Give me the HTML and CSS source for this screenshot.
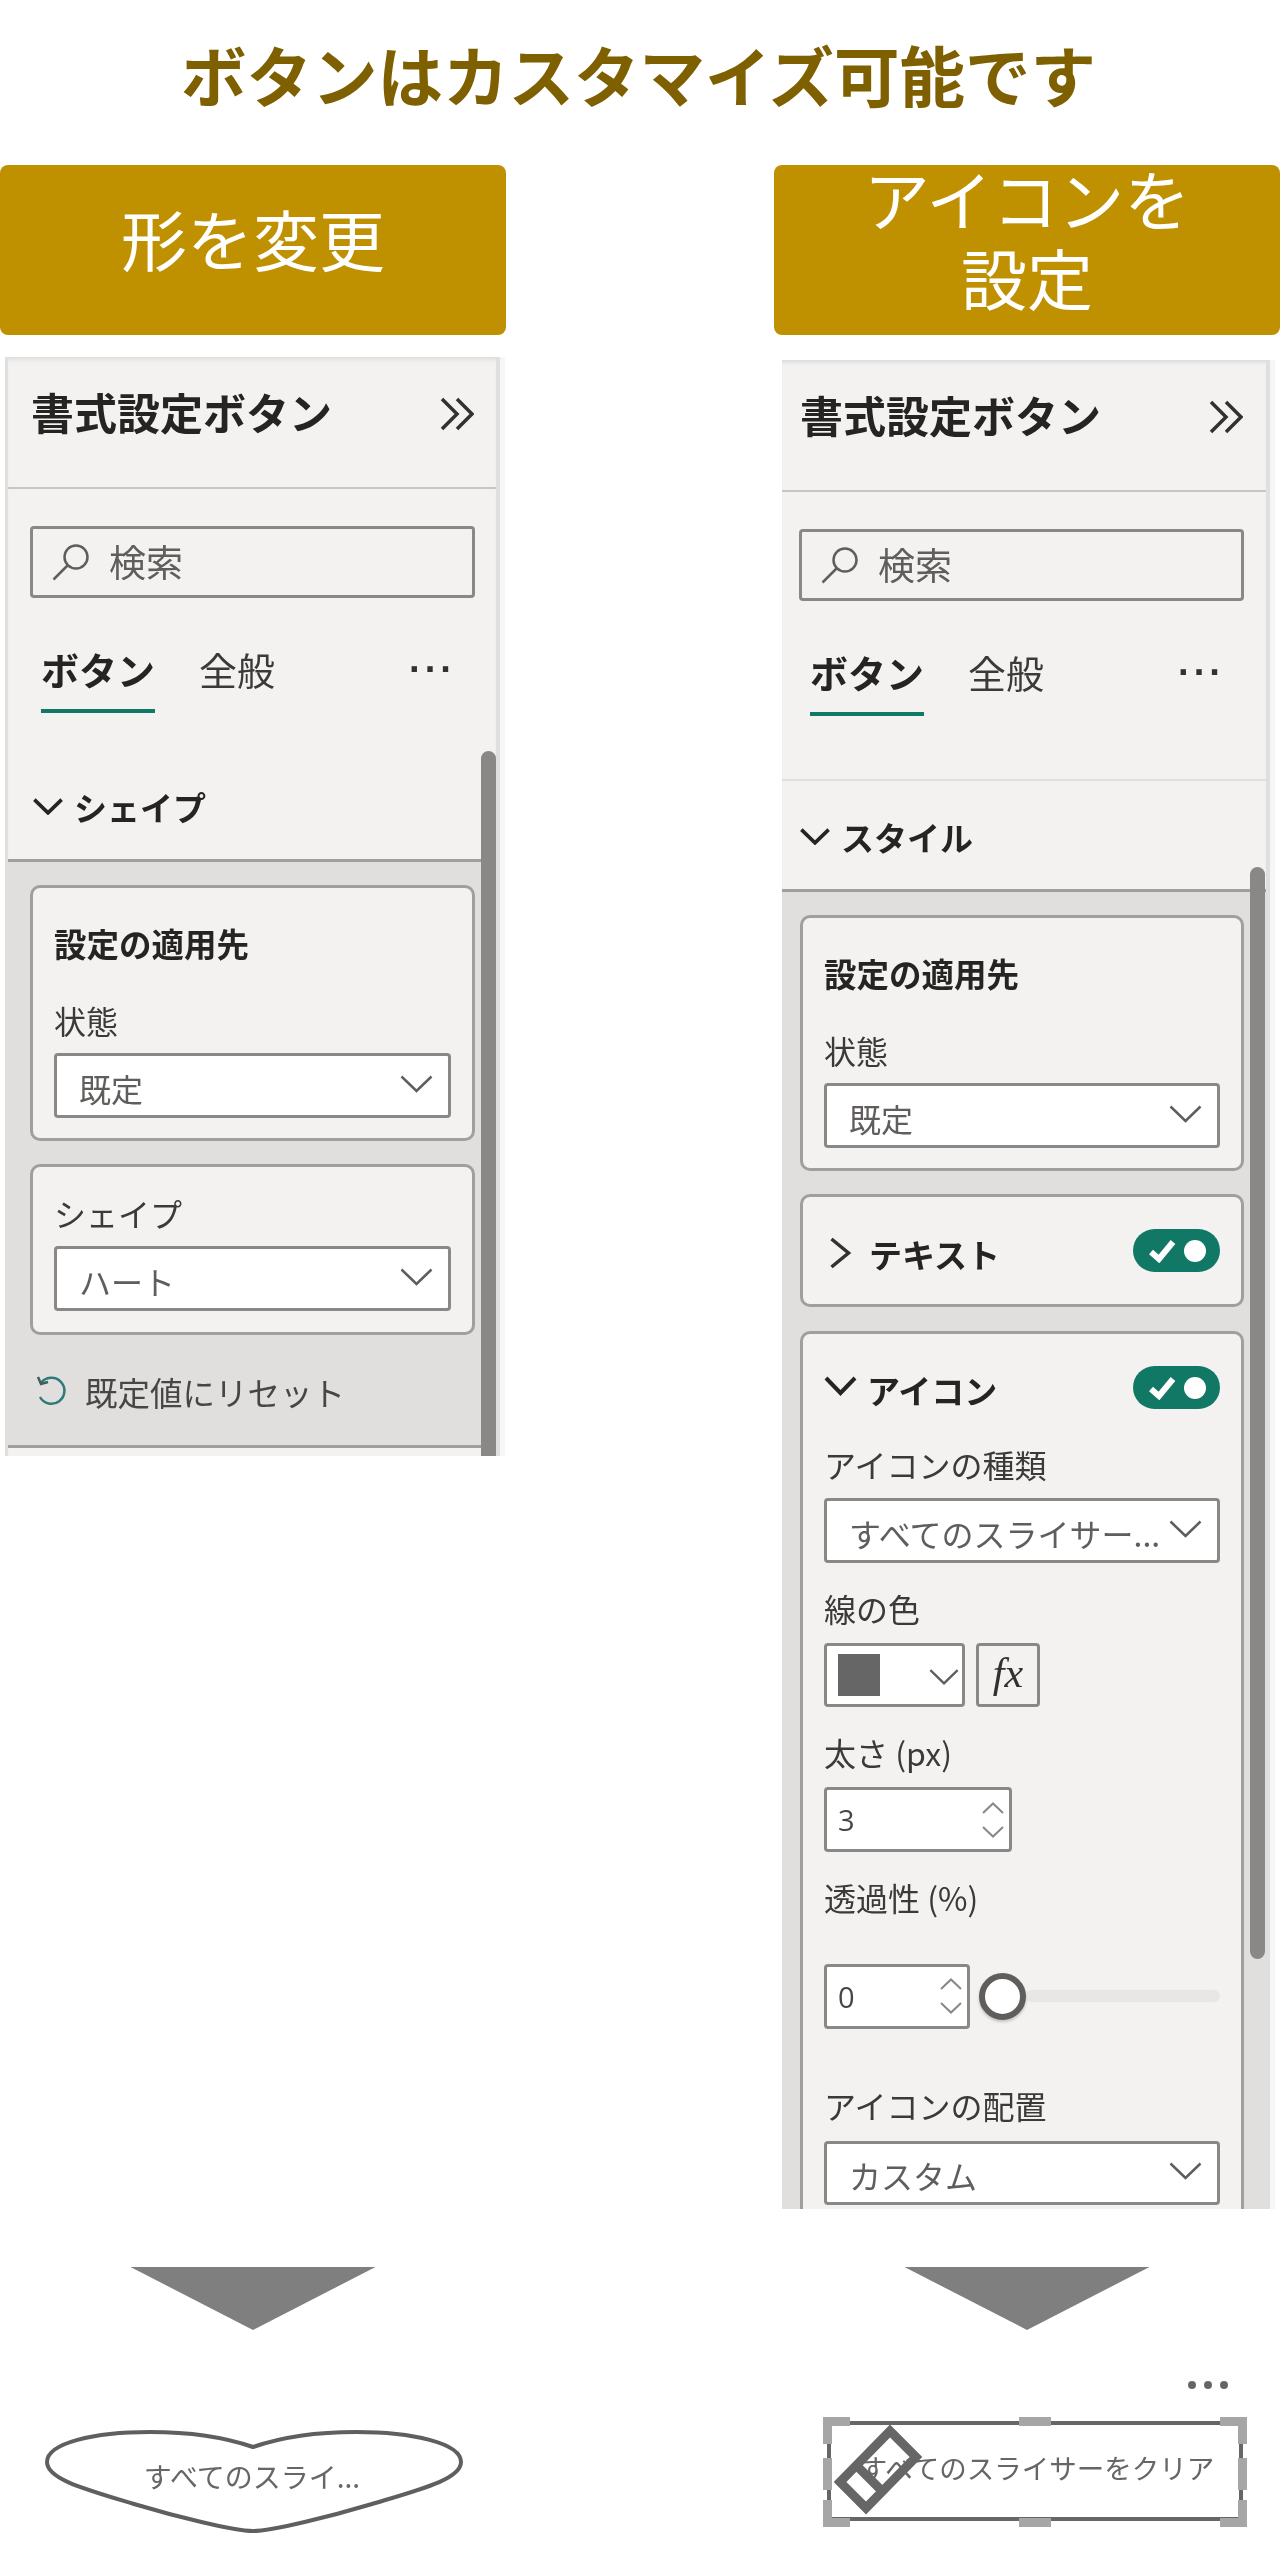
FILE: index.html
```html
<!DOCTYPE html>
<html lang="ja">
<head>
<meta charset="utf-8">
<title>ボタンはカスタマイズ可能です</title>
<link rel="stylesheet" href="styles.css">
</head>
<body>
<svg class="defs" aria-hidden="true">
  <symbol id="sel" viewBox="0 0 33 18"><polyline points="1.5,1.5 16.5,16 31.5,1.5"/></symbol>
  <symbol id="dbl" viewBox="0 0 34 34"><polyline points="2,2 17,17 2,32"/><polyline points="17,2 32,17 17,32"/></symbol>
  <symbol id="mag" viewBox="0 0 38 37"><circle cx="24" cy="13" r="11.5"/><line x1="15.5" y1="21.5" x2="1.5" y2="35.5"/></symbol>
  <symbol id="spin" viewBox="0 0 22 36"><polyline points="1,11 11,1.5 21,11"/><polyline points="1,25 11,34.5 21,25"/></symbol>
  <symbol id="tick" viewBox="0 0 28 24"><polyline points="3,13 11,20 25,3"/></symbol>
</svg>
<main class="page">
  <h1 class="title">ボタンはカスタマイズ可能です</h1>
  <div class="columns">

    <section class="col">
      <div class="banner">形を変更</div>
      <div class="slot">
        <div class="panel panel-left">
          <div class="scroll scroll-left"></div>
          <div class="p-head"><span>書式設定ボタン</span><svg class="i-dbl"><use href="#dbl"/></svg></div>
          <div class="search"><svg class="i-mag"><use href="#mag"/></svg><span>検索</span></div>
          <div class="tabs"><span class="tab tab-on">ボタン</span><span class="tab">全般</span><span class="more">···</span></div>
          <div class="sec-head sec-head-left"><svg class="i-sec"><use href="#sel"/></svg><span>シェイプ</span></div>
          <div class="sec-body">
            <div class="card">
              <div class="card-title">設定の適用先</div>
              <div class="label lab-first">状態</div>
              <div class="select"><span>既定</span><svg class="i-sel"><use href="#sel"/></svg></div>
            </div>
            <div class="card card-compact">
              <div class="label">シェイプ</div>
              <div class="select sel-tight"><span>ハート</span><svg class="i-sel"><use href="#sel"/></svg></div>
            </div>
            <div class="reset">
              <svg class="i-reset" viewBox="0 0 32 32"><path class="r-arc" d="M6 7 A13 13 0 1 1 5 21"/><polyline class="r-arrow" points="3,1 6,8 13,6"/></svg>
              <span>既定値にリセット</span>
            </div>
          </div>
          <div class="p-foot"></div>
        </div>
      </div>
      <div class="arrow"></div>
      <div class="heart">
        <svg class="heart-shape" viewBox="0 0 420 105"><path d="M209 18C180 8 150 3 106 3C50 3 3 14 3 33C3 50 40 60 90 75C130 87 190 102 209 102C228 102 288 87 328 75C378 60 417 50 417 33C417 14 368 3 312 3C268 3 238 8 209 18Z"/></svg>
        <span class="heart-text">すべてのスライ...</span>
      </div>
    </section>

    <section class="col">
      <div class="banner">アイコンを<br>設定</div>
      <div class="slot">
        <div class="panel panel-right">
          <div class="scroll scroll-right"></div>
          <div class="p-head"><span>書式設定ボタン</span><svg class="i-dbl"><use href="#dbl"/></svg></div>
          <div class="search"><svg class="i-mag"><use href="#mag"/></svg><span>検索</span></div>
          <div class="tabs"><span class="tab tab-on">ボタン</span><span class="tab">全般</span><span class="more">···</span></div>
          <div class="rule"></div>
          <div class="sec-head"><svg class="i-sec"><use href="#sel"/></svg><span>スタイル</span></div>
          <div class="sec-body">
            <div class="card">
              <div class="card-title">設定の適用先</div>
              <div class="label lab-first">状態</div>
              <div class="select"><span>既定</span><svg class="i-sel"><use href="#sel"/></svg></div>
            </div>
            <div class="card card-row">
              <div class="row-head">
                <svg class="i-right" viewBox="0 0 21 32"><polyline points="2,2 19,16 2,30"/></svg>
                <span class="row-title">テキスト</span>
                <span class="toggle"><svg class="i-tick"><use href="#tick"/></svg><i class="knob"></i></span>
              </div>
            </div>
            <div class="card card-row card-open">
              <div class="row-head">
                <svg class="i-down" viewBox="0 0 33 20"><polyline points="2,2 16.5,17 31,2"/></svg>
                <span class="row-title">アイコン</span>
                <span class="toggle"><svg class="i-tick"><use href="#tick"/></svg><i class="knob"></i></span>
              </div>
              <div class="label lab-a">アイコンの種類</div>
              <div class="select sel-b"><span>すべてのスライサー...</span><svg class="i-sel"><use href="#sel"/></svg></div>
              <div class="label lab-b">線の色</div>
              <div class="color-row">
                <div class="color-pick"><i class="swatch"></i><svg class="i-sel"><use href="#sel"/></svg></div>
                <div class="fx">fx</div>
              </div>
              <div class="label lab-b">太さ (px)</div>
              <div class="number num-wide"><span>3</span><svg class="i-spin"><use href="#spin"/></svg></div>
              <div class="label lab-b">透過性 (%)</div>
              <div class="slider-row">
                <div class="number num-narrow"><span>0</span><svg class="i-spin"><use href="#spin"/></svg></div>
                <i class="thumb"></i>
                <i class="track"></i>
              </div>
              <div class="label lab-c">アイコンの配置</div>
              <div class="select sel-last"><span>カスタム</span><svg class="i-sel"><use href="#sel"/></svg></div>
            </div>
          </div>
        </div>
      </div>
      <div class="arrow"></div>
      <div class="dots"><i></i><i></i><i></i></div>
      <div class="visual">
        <span class="visual-text">すべてのスライサーをクリア</span>
        <svg class="visual-frame" viewBox="0 0 424 110">
          <rect class="vf-line" x="6" y="6" width="412" height="96"/>
          <path class="vf-handle" d="M0 0H27V9H9V27H0ZM424 0H397V9H415V27H424ZM0 110H27V101H9V83H0ZM424 110H397V101H415V83H424ZM196 0H228V9H196ZM196 101H228V110H196ZM0 41H9V73H0ZM415 41H424V73H415Z"/>
          <polygon class="vf-icon" points="67,14 93,40 43,91 17,65"/>
          <line class="vf-icon" x1="32" y1="47" x2="60" y2="75"/>
        </svg>
      </div>
    </section>

  </div>
</main>
</body>
</html>
```
FILE: styles.css
```css
* { box-sizing: border-box; }
html, body { margin: 0; padding: 0; background: #fff; }
body { font-family: "Noto Sans CJK JP", "Noto Sans", sans-serif; color: #252423; }
.defs { position: absolute; width: 0; height: 0; }
.page { width: 1280px; height: 2560px; overflow: hidden; }
.title { margin: 0 0 18px; height: 147px; line-height: 147px; font-size: 65.5px; font-weight: 700; color: #7f6000; text-align: center; padding-right: 3px; }
.columns { display: flex; justify-content: space-between; }
.col { width: 506px; display: flex; flex-direction: column; }
.banner { height: 170px; padding-bottom: 26px; border-radius: 8px; background: #bf9000; color: #fff; font-size: 66px; line-height: 79px; text-align: center; display: flex; align-items: center; justify-content: center; }
.slot { height: 1874px; }

.panel { position: relative; overflow: hidden; background: #f3f2f1; border-right: 4px solid #e1dfdd; box-shadow: 5px 0 0 #f6f6f6, inset 0 5px 4px -3px #d8d8d8; filter: blur(.45px); }
.panel-left { margin: 22px 0 0 5px; width: 495px; height: 1099px; border-left: 3px solid #e1dfdd; --card-x: 22px; --card-w: 445px; --sel-w: 397px; }
.panel-right { margin: 25px 0 0 8px; width: 488px; height: 1849px; --card-x: 18px; --card-w: 444px; --sel-w: 396px; }

.scroll { position: absolute; right: 0; width: 15px; background: #8a8886; border-radius: 8px 8px 0 0; z-index: 2; }
.scroll-left { top: 394px; bottom: 0; }
.scroll-right { top: 507px; height: 1092px; right: 1px; border-radius: 8px; }

.p-head { height: 132px; border-bottom: 2px solid #c8c6c4; display: flex; align-items: flex-start; padding-top: 28px; font-size: 43px; line-height: 52px; font-weight: 700; }
.panel-left .p-head { padding-left: 23px; }
.panel-right .p-head { padding-left: 18px; }
.i-dbl { width: 34px; height: 34px; margin: 12px 0 0 108px; fill: none; stroke: #323130; stroke-width: 3.5; }

.search { height: 72px; width: var(--card-w); margin: 37px 0 0 var(--card-x); border: 3px solid #8a8886; border-radius: 4px; display: flex; align-items: center; padding-left: 19px; font-size: 37px; color: #605e5c; }
.search span { margin-top: -3px; }
.i-mag { width: 38px; height: 37px; margin-right: 19px; fill: none; stroke: #605e5c; stroke-width: 2.5; }
.panel-right .search { width: 445px; margin-left: 17px; }

.tabs { display: flex; align-items: flex-start; margin-top: 46px; height: 69px; font-size: 38px; line-height: 50px; }
.panel-left .tabs { padding-left: 33px; }
.panel-right .tabs { padding-left: 28px; }
.tab { color: #3b3a39; height: 69px; margin-right: 44px; }
.tab-on { font-weight: 700; color: #252423; border-bottom: 4px solid #117865; }
.more { font-size: 38px; line-height: 38px; letter-spacing: 3px; margin: 6px 0 0 90px; font-family: "Liberation Sans", sans-serif; font-weight: 700; color: #323130; }

.rule { height: 2px; background: #e1dfdd; margin-top: 63px; }
.sec-head { height: 106px; margin-top: 5px; border-bottom: 3px solid #a19f9d; display: flex; align-items: center; padding: 0 0 2px 18px; font-size: 33px; font-weight: 700; }
.sec-head-left { margin-top: 43px; padding-left: 25px; }
.i-sec { width: 30px; height: 17px; margin-right: 11px; fill: none; stroke: #252423; stroke-width: 4; }

.sec-body { background: #e1dfdd; padding: 23px 0 36px var(--card-x); }
.panel-right .sec-body { padding-bottom: 0; }
.p-foot { border-top: 3px solid #a19f9d; height: 14px; }

.card { width: var(--card-w); border: 3px solid #a19f9d; border-radius: 10px; background: #f3f2f1; padding: 35px 21px 20px; }
.card + .card { margin-top: 23px; }
.card-title { font-size: 32.5px; line-height: 40px; font-weight: 700; white-space: nowrap; }
.label { font-size: 32px; line-height: 40px; color: #3b3a39; white-space: nowrap; }
.lab-first { margin-top: 37px; }
.lab-first + .select { margin-top: 13px; }
.lab-a { margin-top: 35px; }
.lab-b { margin-top: 25px; }
.lab-c { margin-top: 57px; }
.select { width: var(--sel-w); height: 65px; margin-top: 11px; border: 3px solid #8a8886; border-radius: 4px; background: #fff; display: flex; align-items: center; justify-content: space-between; padding: 4px 15px 0 22px; font-size: 32px; color: #605e5c; white-space: nowrap; }
.sel-b { margin-top: 14px; }
.sel-tight { margin-top: 13px; }
.sel-last { height: 64px; margin-top: 16px; }
.i-sel { width: 33px; height: 18px; margin-top: -8px; flex: none; fill: none; stroke: #605e5c; stroke-width: 2.5; }
.card-compact { padding: 26px 21px 21px; }
.reset { display: flex; align-items: center; margin-top: 37px; margin-bottom: -3px; padding-left: 5px; font-size: 32.5px; line-height: 40px; color: #484644; }
.i-reset { width: 32px; height: 32px; margin-right: 18px; fill: none; stroke-width: 2.5; }
.r-arc { stroke: #2f7a78; }
.r-arrow { stroke: #3f5f5f; }

.card-row { padding: 32px 21px 32px; }
.card-open { padding-bottom: 0; height: 900px; }
.card + .card-open { margin-top: 24px; }
.row-head { display: flex; align-items: center; height: 43px; font-size: 33px; font-weight: 700; }
.row-title { margin: 6px 0 0 -2px; flex: 1; line-height: 40px; }
.card-open .row-title { margin-top: 4px; }
.i-right { width: 22px; height: 32px; margin: 4px 20px 0 5px; fill: none; stroke: #323130; stroke-width: 3.5; }
.i-down { width: 33px; height: 20px; margin: -3px 12px 0 0; fill: none; stroke: #252423; stroke-width: 4; }
.toggle { flex: none; width: 87px; height: 43px; border-radius: 22px; background: #117865; display: flex; align-items: center; padding-left: 15px; }
.i-tick { width: 28px; height: 24px; fill: none; stroke: #fff; stroke-width: 6; }
.knob { width: 22px; height: 22px; border-radius: 50%; background: #fff; margin-left: 8px; }

.color-row { display: flex; gap: 11px; margin-top: 15px; }
.color-pick { width: 141px; height: 64px; border: 3px solid #8a8886; border-radius: 4px; background: #fff; display: flex; align-items: center; justify-content: space-between; padding: 0 3px 0 11px; }
.color-pick .i-sel { margin-top: 4px; width: 30px; }
.swatch { width: 42px; height: 42px; background: #666; }
.fx { width: 64px; height: 64px; border: 3px solid #8a8886; border-radius: 4px; background: #f3f2f1; font-family: "Liberation Serif", serif; font-style: italic; font-size: 42px; line-height: 54px; text-align: center; color: #323130; }

.number { height: 65px; margin-top: 15px; border: 3px solid #8a8886; border-radius: 4px; background: #fff; display: flex; align-items: center; justify-content: space-between; padding: 0 5px 0 11px; font-family: "Open Sans", sans-serif; font-size: 29px; color: #484644; }
.num-wide { width: 188px; }
.num-narrow { width: 146px; margin-top: 0; flex: none; }
.i-spin { width: 22px; height: 36px; fill: none; stroke: #8a8886; stroke-width: 2; }
.slider-row { display: flex; align-items: center; width: var(--sel-w); height: 64px; margin-top: 47px; }
.thumb { flex: none; width: 47px; height: 47px; margin-left: 9px; border-radius: 50%; border: 6px solid #605e5c; background: #fff; box-shadow: 0 2px 3px rgba(0,0,0,.2); position: relative; z-index: 1; }
.track { flex: 1; height: 12px; border-radius: 6px; background: #e8e7e6; margin-left: -1px; }

.arrow { width: 245px; height: 63px; margin: 58px auto 0; background: #7f7f7f; clip-path: polygon(0 0, 100% 0, 50% 100%); }

.heart { position: relative; width: 420px; height: 105px; margin: 99px 0 0 44px; display: flex; align-items: center; justify-content: center; filter: blur(.4px); }
.heart-shape { position: absolute; inset: 0; width: 100%; height: 100%; fill: #fff; stroke: #5f5f5f; stroke-width: 4; }
.heart-text { position: relative; font-size: 28px; line-height: 40px; color: #666; margin: -12px 4px 0 0; }

.dots { display: flex; justify-content: flex-end; gap: 8px; height: 8px; margin: 51px 52px 0 0; }
.dots i { width: 8px; height: 8px; border-radius: 50%; background: #666; }
.visual { position: relative; width: 424px; height: 110px; margin: 28px 0 0 49px; display: flex; align-items: center; justify-content: center; font-size: 27.5px; color: #666; filter: blur(.4px); }
.visual-text { padding-left: 4px; margin-top: -11px; white-space: nowrap; }
.visual-frame { position: absolute; inset: 0; width: 100%; height: 100%; }
.vf-line { fill: none; stroke: #666; stroke-width: 4; }
.vf-handle { fill: #a6a6a6; }
.vf-icon { fill: none; stroke: #666; stroke-width: 9; }
```
